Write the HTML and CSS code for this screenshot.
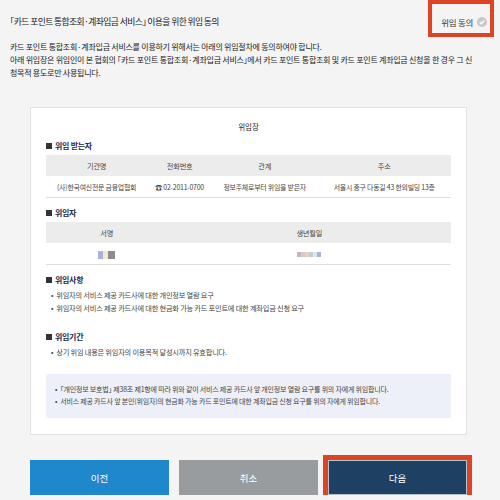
FILE: index.html
```html
<!DOCTYPE html>
<html>

<head>
    <title>위임 동의</title>
    <link rel="stylesheet" href="styles.css">
</head>

<body>
    <div class="head">
        <h1 class="title">「카드 포인트 통합조회·계좌입금 서비스」 이용을 위한 위임 동의</h1>
        <label class="agree">위임 동의
            <span class="check">
                <svg width="10" height="10" viewBox="0 0 10 10">
                    <circle cx="5" cy="5" r="5" fill="#c9c9c9"/>
                    <path d="M2.6 5.2 L4.3 6.8 L7.5 3.4" fill="none" stroke="#fff" stroke-width="1.3"/>
                </svg>
            </span>
        </label>
    </div>

    <p class="intro">카드 포인트 통합조회·계좌입금 서비스를 이용하기 위해서는 아래의 위임절차에 동의하여야 합니다.<br>아래 위임장은 위임인이 본 협회의 「카드 포인트 통합조회·계좌입금 서비스」에서 카드 포인트 통합조회 및 카드 포인트 계좌입금 신청을 한 경우 그 신<br>청목적 용도로만 사용됩니다.</p>

    <div class="card">
        <h2 class="card-title">위임장</h2>

        <h3 class="sec">위임 받는자</h3>
        <table class="tbl">
            <colgroup>
                <col style="width:25%">
                <col style="width:16%">
                <col style="width:26%">
                <col style="width:33%">
            </colgroup>
            <tr>
                <th>기관명</th>
                <th>전화번호</th>
                <th>관계</th>
                <th>주소</th>
            </tr>
            <tr>
                <td>(사)한국여신전문 금융업협회</td>
                <td>☎ 02-2011-0700</td>
                <td>정보주체로부터 위임을 받은자</td>
                <td>서울시 중구 다동길 43 한외빌딩 13층</td>
            </tr>
        </table>

        <h3 class="sec">위임자</h3>
        <table class="tbl">
            <colgroup>
                <col style="width:30%">
                <col style="width:70%">
            </colgroup>
            <tr>
                <th>서명</th>
                <th>생년월일</th>
            </tr>
            <tr>
                <td><span class="mask"><i class="m1"></i><i class="m2"></i><i class="m3"></i></span></td>
                <td><span class="mask small"><i class="m4"></i><i class="m5"></i><i class="m6"></i><i class="m7"></i><i class="m8"></i><i class="m9"></i></span></td>
            </tr>
        </table>

        <h3 class="sec">위임사항</h3>
        <ul class="list">
            <li>위임자의 서비스 제공 카드사에 대한 개인정보 열람 요구</li>
            <li>위임자의 서비스 제공 카드사에 대한 현금화 가능 카드 포인트에 대한 계좌입금 신청 요구</li>
        </ul>

        <h3 class="sec">위임기간</h3>
        <ul class="list">
            <li>상기 위임 내용은 위임자의 이용목적 달성시까지 유효합니다.</li>
        </ul>

        <div class="notice">
            <ul class="list">
                <li>「개인정보 보호법」 제38조 제1항에 따라 위와 같이 서비스 제공 카드사 앞 개인정보 열람 요구를 위의 자에게 위임합니다.</li>
                <li>서비스 제공 카드사 앞 본인(위임자)의 현금화 가능 카드 포인트에 대한 계좌입금 신청 요구를 위의 자에게 위임합니다.</li>
            </ul>
        </div>
    </div>

    <div class="btns">
        <button class="btn btn-prev">이전</button>
        <button class="btn btn-cancel">취소</button>
        <button class="btn btn-next">다음</button>
    </div>
</body>

</html>
```

FILE: styles.css
```css
body {
    margin: 0;
    background-color: #f4f4f4;
    font-family: "Noto Sans CJK KR", "Noto Sans", sans-serif;
    color: #222;
    overflow: hidden;
}

.head {
    display: flex;
    justify-content: space-between;
    align-items: flex-start;
    height: 37px;
    padding: 0 6px 0 10px;
}

.title {
    margin: 0;
    padding-top: 15px;
    font-size: 8.8px;
    line-height: 14px;
    font-weight: normal;
    letter-spacing: -0.6px;
    font-feature-settings: "halt";
    color: #222;
}

.agree {
    display: flex;
    align-items: center;
    gap: 4px;
    box-sizing: border-box;
    height: 37px;
    padding: 11px 3px 4px 9px;
    border: 4px solid #dc4424;
    font-size: 8.5px;
    line-height: 14px;
    letter-spacing: -0.3px;
    color: #333;
}

.check {
    display: flex;
}

.intro {
    margin: 3px 0 0;
    padding: 0 10px;
    font-size: 8px;
    line-height: 13px;
    letter-spacing: -0.25px;
    font-feature-settings: "halt";
    color: #222;
}

.card {
    margin: 28px 33px 0 30px;
    padding: 13px 15px 16px 15px;
    background-color: #fff;
    border: 1px solid #e2e2e2;
}

.card-title {
    margin: 0;
    text-align: center;
    font-size: 7.5px;
    line-height: 12px;
    font-weight: normal;
    color: #222;
}

.sec {
    margin: 7px 0 3px;
    font-size: 8px;
    line-height: 12px;
    font-weight: bold;
    letter-spacing: -0.3px;
    color: #1f2b4d;
}

.sec::before {
    content: "";
    display: inline-block;
    width: 6px;
    height: 6px;
    margin-right: 3px;
    background-color: #333;
}

.tbl + .sec {
    margin-top: 9px;
}

.tbl {
    width: 100%;
    border-collapse: collapse;
    table-layout: fixed;
}

.tbl th,
.tbl td {
    height: 21px;
    padding: 0;
    text-align: center;
    font-weight: normal;
    letter-spacing: -0.2px;
}

.tbl th {
    background-color: #ececec;
    font-size: 7.2px;
    color: #444;
}

.tbl td {
    font-size: 6.9px;
    color: #444;
    border-bottom: 1px solid #dcdcdc;
}

.mask {
    display: inline-flex;
    vertical-align: middle;
}

.mask i {
    display: block;
    width: 5px;
    height: 8px;
}

.mask.small i {
    width: 4px;
    height: 5px;
}

.m1 { background-color: #aab0d8; }
.m2 { background-color: #f1e8da; }
.m3 { background-color: #8c8c8c; width: 7px !important; }
.m4 { background-color: #c9b8b0; }
.m5 { background-color: #d6c6d6; }
.m6 { background-color: #ead2b8; }
.m7 { background-color: #bfd0d6; }
.m8 { background-color: #dbe6f2; }
.m9 { background-color: #a9b4d1; }

.list {
    margin: 0;
    padding: 0 0 0 5px;
    list-style: none;
}

.list li {
    font-size: 7.2px;
    line-height: 13px;
    letter-spacing: -0.2px;
    color: #444;
}

.list li::before {
    content: "•";
    margin-right: 3px;
}

.list + .sec {
    margin-top: 16px;
}

.notice {
    margin-top: 15px;
    padding: 9px 0 11px 4px;
    background-color: #edf0f8;
}

.notice .list li {
    font-size: 7px;
    line-height: 12px;
    font-feature-settings: "halt";
}

.btns {
    display: flex;
    gap: 10px;
    margin: 25px 33px 0 30px;
}

.btn {
    flex: 1;
    height: 35px;
    margin: 0;
    border: 1px solid transparent;
    font-family: inherit;
    font-size: 9.5px;
    color: #fff;
}

.btn-prev {
    background-color: #1f87cc;
}

.btn-cancel {
    background-color: #999c9f;
}

.btn-next {
    background-color: #1d4063;
    border-color: #b5c2cf;
    outline: 5px solid #dc4424;
    outline-offset: 0;
}
```
